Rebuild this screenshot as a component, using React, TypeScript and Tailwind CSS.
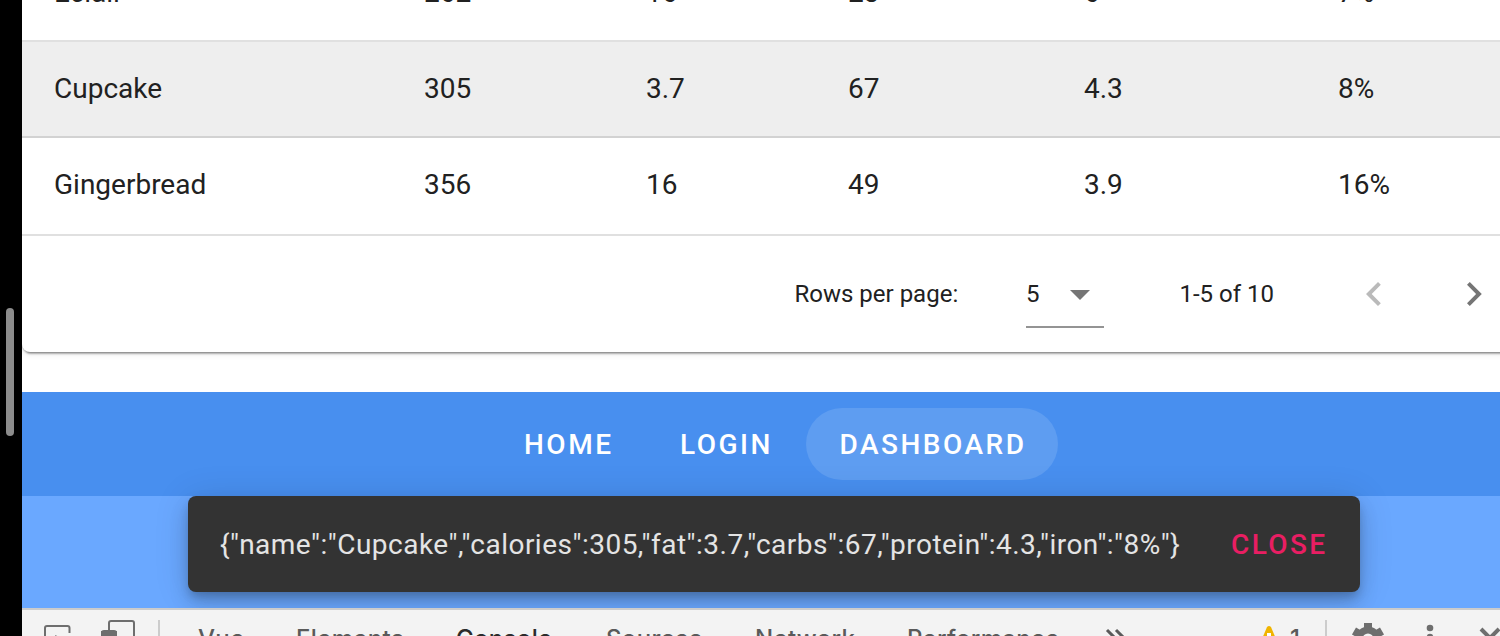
const rows: string[][] = [
  ["Eclair", "262", "16", "23", "6", "7%"],
  ["Cupcake", "305", "3.7", "67", "4.3", "8%"],
  ["Gingerbread", "356", "16", "49", "3.9", "16%"],
];

function Row({ cells, className }: { cells: string[]; className: string }) {
  return (
    <div
      className={`grid shrink-0 grid-cols-[370px_222px_202px_236px_254px_1fr] items-center pl-8 text-[28px] leading-[42px] text-[#212121] ${className}`}
    >
      {cells.map((cell, i) => (
        <span key={i}>{cell}</span>
      ))}
    </div>
  );
}

function DataTable() {
  return (
    <section className="-mr-3 flex h-[352px] shrink-0 flex-col justify-end rounded-bl-lg bg-white shadow-[0_6px_2px_-4px_rgba(0,0,0,0.2),0_1px_2px_0_rgba(0,0,0,0.3),0_2px_6px_0_rgba(0,0,0,0.1)]">
      <Row cells={rows[0]} className="h-24 border-b-2 border-[#e0e0e0]" />
      <Row cells={rows[1]} className="h-24 border-b-2 border-[#d2d2d2] bg-[#eeeeee]" />
      <Row cells={rows[2]} className="h-24 pb-0.5" />
      <footer className="flex h-[118px] shrink-0 items-center border-t-2 border-[#e0e0e0] text-2xl text-[#212121]">
        <span className="ml-[772.5px] w-[231.5px]">Rows per page:</span>
        <div className="flex h-[68px] w-[78px] items-center border-b-2 border-[#949494] pt-0.5">
          <span className="w-[43.5px]">5</span>
          <svg className="mt-0.5" width="20" height="10" viewBox="0 0 20 10" fill="#757575">
            <path d="M0 0h20L10 10z" />
          </svg>
        </div>
        <span className="ml-[75.5px] w-[186.5px]">1-5 of 10</span>
        <svg width="16" height="24" viewBox="0 0 16 24" fill="#bababa">
          <path d="M14.8 2.8 12 0 0 12l12 12 2.8-2.8L5.7 12z" />
        </svg>
        <svg className="ml-[85px]" width="16" height="24" viewBox="0 0 16 24" fill="#757575">
          <path d="M0 2.8 2.8 0l12 12-12 12L0 21.2 9.1 12z" />
        </svg>
      </footer>
    </section>
  );
}

function NavBar() {
  return (
    <nav className="mt-10 flex h-[104px] shrink-0 items-center bg-[#488fef] pl-[490px] text-[28px] font-medium tracking-[2.5px] text-white">
      <a className="w-[156px] px-3 pt-0.5">HOME</a>
      <a className="w-[138px] px-3 pt-0.5">LOGIN</a>
      <a className="flex h-[72px] w-[252px] items-center justify-center rounded-full bg-[#5e9df1] pl-0.5 pt-0.5">DASHBOARD</a>
    </nav>
  );
}

function Snackbar() {
  return (
    <div className="ml-[166px] flex h-24 w-[1172px] items-center rounded-lg bg-[#333333] pl-8 pt-0.5 text-[28px] shadow-[0_6px_10px_-2px_rgba(0,0,0,0.2),0_12px_20px_0_rgba(0,0,0,0.14),0_2px_36px_0_rgba(0,0,0,0.12)]">
      <span className="w-[1011px] whitespace-nowrap tracking-[0.49px] text-[#e4e4e4]">
        {'{"name":"Cupcake","calories":305,"fat":3.7,"carbs":67,"protein":4.3,"iron":"8%"}'}
      </span>
      <span className="font-medium tracking-[2.4px] text-[#e91e63]">CLOSE</span>
    </div>
  );
}

function DevTools() {
  return (
    <div className="flex h-7 shrink-0 items-start overflow-hidden border-t-2 border-[#cccccc] bg-[#f3f3f3] font-['Inter',sans-serif] text-2xl leading-7 text-[#5a5a5a]">
      <svg className="ml-[20px] mt-[12px] shrink-0" width="32" height="32" viewBox="0 0 32 32" fill="none" stroke="#6e6e6e" strokeWidth="2">
        <path d="M27.5 11V6q0-2-2-2H5Q3 4 3 6v18q0 2 2 2h6" />
        <path d="m13 13 16 7-7 2-3 7z" fill="#6e6e6e" stroke="none" />
      </svg>
      <svg className="ml-[26px] mt-[9px] shrink-0" width="36" height="36" viewBox="0 0 36 36" fill="none" stroke="#6e6e6e" strokeWidth="2">
        <path d="M9 13V4q0-2 2-2h21q2 0 2 2v24H17" />
        <path d="M2 14q0-2 2-2h10q2 0 2 2v18H3z" fill="#f3f3f3" />
        <path d="M2 13h14v4H2z" fill="#6e6e6e" />
      </svg>
      <div className="ml-[22px] mt-[10px] h-7 w-0.5 shrink-0 bg-[#cccccc]" />
      <div className="mt-[15px] flex shrink-0 font-medium tracking-[0.35px]">
        <span className="ml-[38px] w-[98px]">Vue</span>
        <span className="w-[160px]">Elements</span>
        <span className="w-[150px] text-[#2b2b2b]">Console</span>
        <span className="w-[149px]">Sources</span>
        <span className="w-[152px]">Network</span>
        <span className="w-[198px]">Performance</span>
      </div>
      <svg className="mt-[18px] shrink-0" width="22" height="20" viewBox="0 0 22 20" fill="none" stroke="#5a5a5a" strokeWidth="3">
        <path d="m2 2 8 8-8 8M11 2l8 8-8 8" />
      </svg>
      <svg className="ml-[131px] mt-[15px] shrink-0" width="22" height="24" viewBox="0 0 22 24">
        <path d="M9 2q2-2 4 0l8 19q0 2-2 2H3q-2 0-2-2z" fill="#f0b400" />
        <path d="M9 8h4v8H9zM9 18h4v3H9z" fill="white" />
      </svg>
      <span className="ml-[10px] mt-[15px] w-[35px] shrink-0 font-medium">1</span>
      <div className="mt-[10px] h-7 w-0.5 shrink-0 bg-[#cccccc]" />
      <svg className="ml-[23px] mt-[11px] shrink-0" width="36" height="36" viewBox="0 0 36 36" fill="none">
        <circle cx="18" cy="18" r="9" stroke="#6e6e6e" strokeWidth="7" />
        <path d="M18 2v6M18 28v6M4 10l6 3.5M26 22.5l6 3.5M4 26l6-3.5M26 13.5l6-3.5" stroke="#6e6e6e" strokeWidth="8" />
      </svg>
      <svg className="ml-[40px] mt-[14px] shrink-0" width="8" height="24" viewBox="0 0 8 24" fill="#6e6e6e">
        <circle cx="4" cy="4" r="3.3" />
        <circle cx="4" cy="13" r="3.3" />
        <circle cx="4" cy="22" r="3.3" />
      </svg>
      <svg className="ml-[45px] mt-[16px] shrink-0" width="24" height="24" viewBox="0 0 24 24" fill="none" stroke="#6e6e6e" strokeWidth="4">
        <path d="m2 3 18 18M20 3 2 21" />
      </svg>
    </div>
  );
}

export default function App() {
  return (
    <div className="flex h-[636px] w-[1500px] overflow-hidden bg-black font-['Roboto',sans-serif]">
      <aside className="flex w-[22px] shrink-0 items-start pl-1.5 pt-[308px]">
        <div className="h-32 w-2 rounded-full bg-[#8c8c8c]" />
      </aside>
      <main className="flex w-[1478px] shrink-0 flex-col overflow-hidden bg-white">
        <DataTable />
        <NavBar />
        <div className="h-28 shrink-0 bg-[#6aa8ff]">
          <Snackbar />
        </div>
        <DevTools />
      </main>
    </div>
  );
}
